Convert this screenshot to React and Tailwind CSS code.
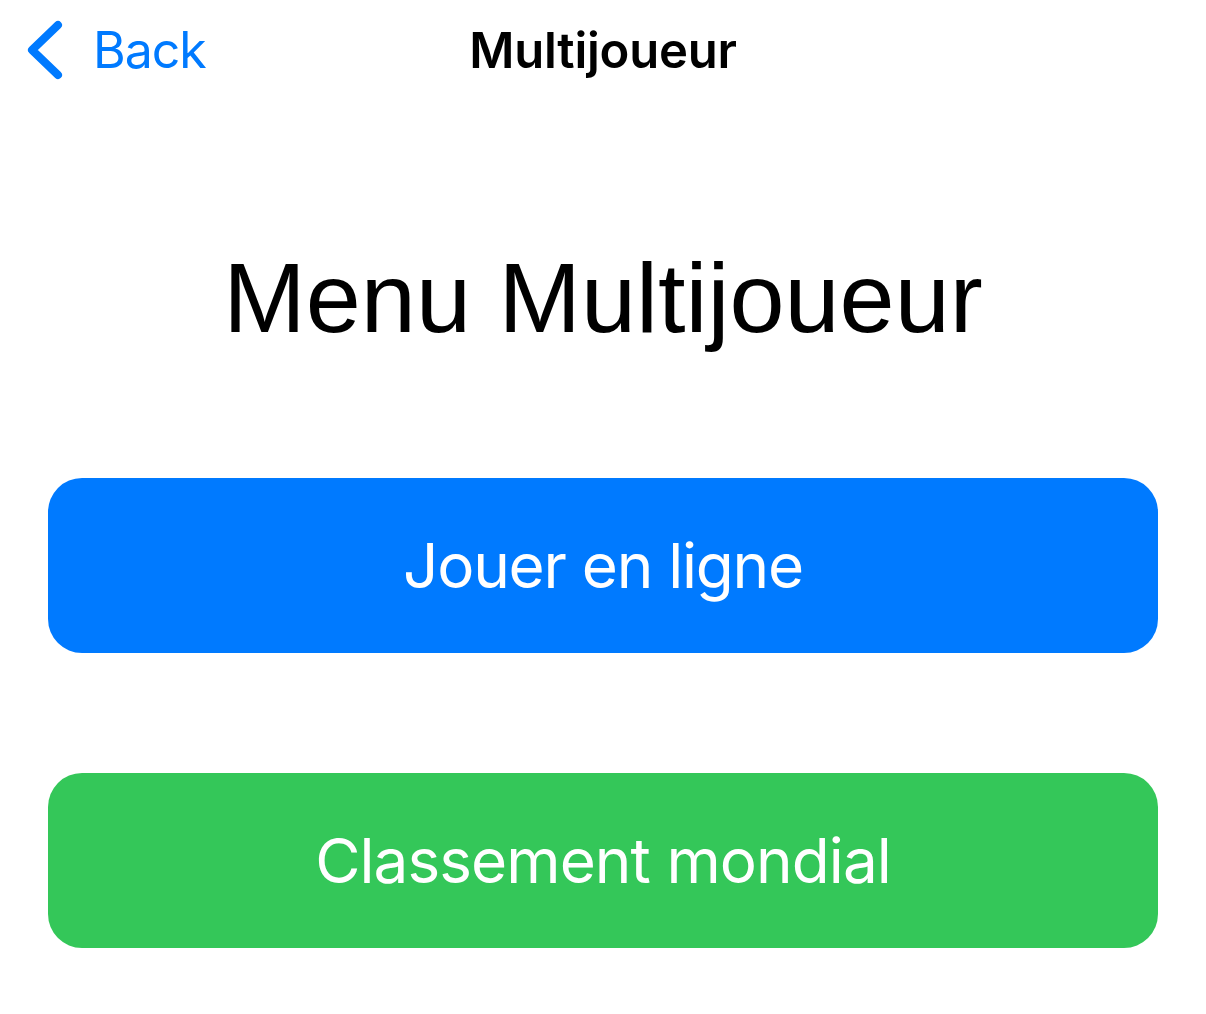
export default function App() {
  return (
    <div className="min-h-screen w-full bg-white" style={{ fontFamily: 'Inter, "Noto Sans", sans-serif' }}>
      {/* Navigation bar */}
      <div className="grid h-[100px] grid-cols-[1fr_auto_1fr] items-center">
        <div className="flex items-center pl-[25px]">
          <svg width="40" height="60" viewBox="0 0 40 60" fill="none" className="shrink-0">
            <path d="M33 5 L7 30 L33 55" stroke="#007AFF" strokeWidth="8" strokeLinecap="round" strokeLinejoin="round" />
          </svg>
          <span className="ml-[28px] text-[50px] leading-none tracking-[-0.02em] text-[#007AFF]">Back</span>
        </div>
        <div className="text-[49px] font-semibold leading-none tracking-[-0.005em] text-black">Multijoueur</div>
        <div />
      </div>

      {/* Heading */}
      <h1
        className="mt-[148px] text-center text-[99px] leading-[100px] text-black"
        style={{ fontFamily: '"Liberation Sans", Arial, sans-serif' }}
      >
        Menu Multijoueur
      </h1>

      {/* Actions */}
      <div className="mx-12 mt-[130px] flex flex-col gap-[120px]">
        <button className="flex h-[175px] items-center justify-center rounded-[34px] bg-[#007AFF] text-[62px] tracking-[-0.02em] text-white">
          Jouer en ligne
        </button>
        <button className="flex h-[175px] items-center justify-center rounded-[34px] bg-[#34C759] text-[62px] tracking-[-0.015em] text-white">
          Classement mondial
        </button>
      </div>
    </div>
  );
}
